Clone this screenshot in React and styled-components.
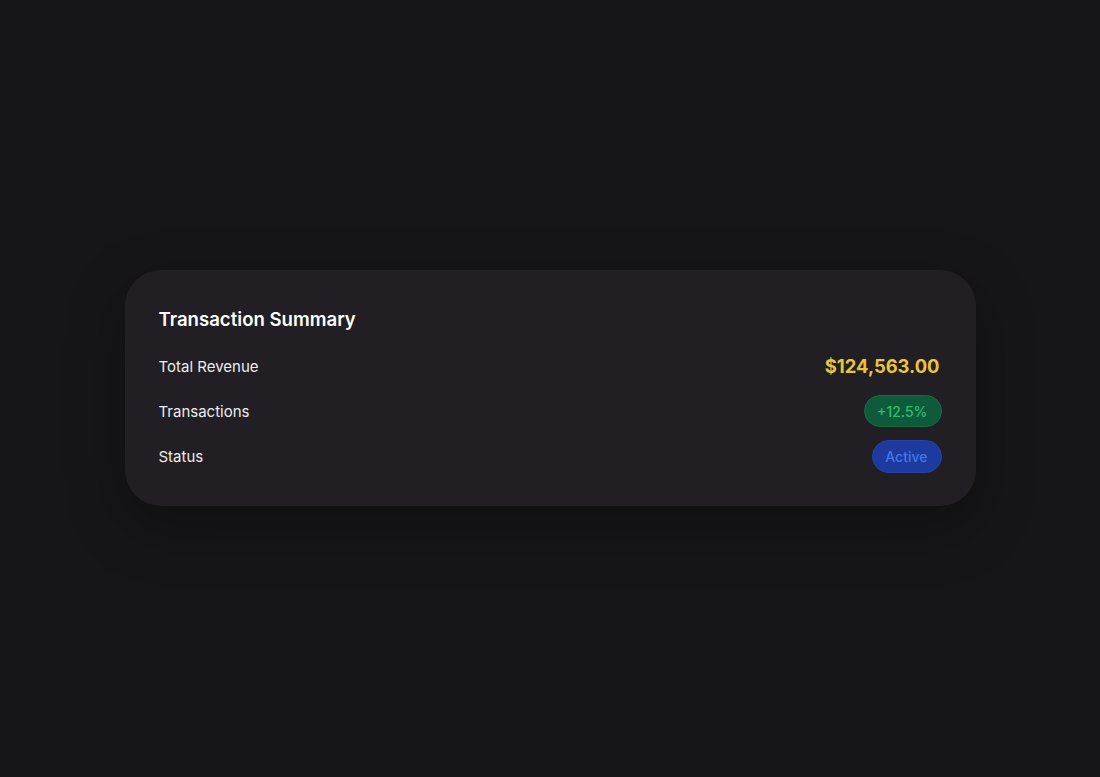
import React from "react";
import styled, { createGlobalStyle } from "styled-components";

const Global = createGlobalStyle`
  * { box-sizing: border-box; }
  html, body { margin: 0; padding: 0; background: #161518; }
  body { font-family: Inter, "Noto Sans", sans-serif; -webkit-font-smoothing: antialiased; }
`;

const Page = styled.div`
  min-height: 100vh;
  display: flex;
  align-items: center;
  justify-content: center;
  padding-bottom: 1px;
  background: #161518;
`;

const Card = styled.section`
  width: 851px;
  background: #211f23;
  border-radius: 36px;
  padding: 38px 34px 33px;
  display: flex;
  flex-direction: column;
  box-shadow: 0 20px 60px rgba(0, 0, 0, 0.3);
`;

const Title = styled.h2`
  margin: 0 0 19px;
  font-size: 18.6px;
  line-height: 23px;
  font-weight: 600;
  color: #ffffff;
`;

const Rows = styled.div`
  display: flex;
  flex-direction: column;
  gap: 13px;
`;

const Row = styled.div`
  display: flex;
  align-items: center;
  justify-content: space-between;
  min-height: 32px;
`;

const Label = styled.span`
  font-size: 15px;
  color: #ececee;
  font-weight: 400;
`;

const Amount = styled.span`
  font-size: 18.4px;
  font-weight: 700;
  color: #eac53c;
  margin-right: 2px;
`;

const Pill = styled.span`
  display: inline-flex;
  align-items: center;
  justify-content: center;
  height: ${(p) => p.$h || 32}px;
  padding: 0 13px 0 12.5px;
  border-radius: 999px;
  font-size: 14px;
  font-weight: 500;
  background: ${(p) => p.$bg};
  color: ${(p) => p.$fg};
  border: 1px solid ${(p) => p.$border};
`;

export default function App() {
  return (
    <>
      <Global />
      <Page>
        <Card>
          <Title>Transaction Summary</Title>
          <Rows>
            <Row>
              <Label>Total Revenue</Label>
              <Amount>$124,563.00</Amount>
            </Row>
            <Row>
              <Label>Transactions</Label>
              <Pill $bg="#0e5a3b" $fg="#25c16f" $border="#146c47">+12.5%</Pill>
            </Row>
            <Row>
              <Label>Status</Label>
              <Pill $bg="#1f3a9e" $fg="#3f78e8" $border="#2442aa" $h={33}>Active</Pill>
            </Row>
          </Rows>
        </Card>
      </Page>
    </>
  );
}
